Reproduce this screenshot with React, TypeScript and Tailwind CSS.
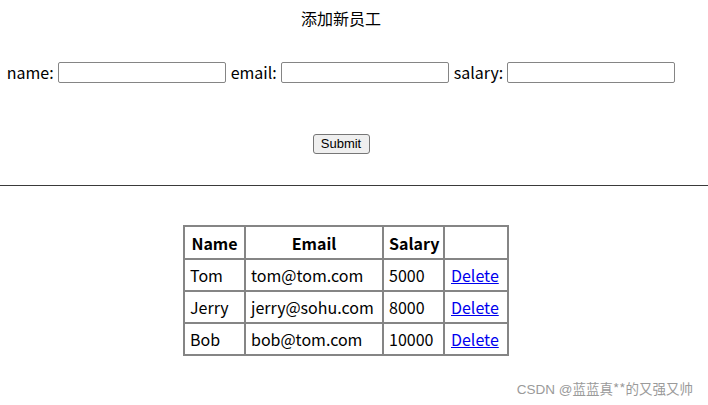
import React from "react";

const rows = [
  { name: "Tom", email: "tom@tom.com", salary: "5000" },
  { name: "Jerry", email: "jerry@sohu.com", salary: "8000" },
  { name: "Bob", email: "bob@tom.com", salary: "10000" },
];

export default function App() {
  const font = { fontFamily: '"Noto Sans CJK SC", "Noto Sans", sans-serif' };
  return (
    <div className="relative h-[405px] w-[708px] overflow-hidden bg-white text-black" style={font}>
      <div className="w-[682px]">
        <div className="mt-[6px] text-center text-[16px] leading-[24px]">添加新员工</div>
        <div className="mt-[32px] flex h-[21px] items-center justify-center text-[16px] leading-[21px]">
          <span>name:</span>
          <input className="ml-[4px] h-[21px] w-[168px] rounded-[2px] border border-[#858585] bg-white" />
          <span className="ml-[5px]">email:</span>
          <input className="ml-[4px] h-[21px] w-[168px] rounded-[2px] border border-[#858585] bg-white" />
          <span className="ml-[5px]">salary:</span>
          <input className="ml-[4px] h-[21px] w-[168px] rounded-[2px] border border-[#858585] bg-white" />
        </div>
        <div className="mt-[51px] flex justify-center">
          <button className="h-[20px] w-[57px] rounded-[3px] border border-[#767676] bg-[#efefef] text-[13px] leading-[18px] text-black" style={{ fontFamily: '"Liberation Sans", Arial, sans-serif' }}>
            Submit
          </button>
        </div>
      </div>
      <div className="mt-[31px] h-px w-full bg-[#3a3a3a]" />
      <div className="mt-[39px] flex w-[692px] justify-center">
        <table className="w-[326px] table-fixed border-collapse border-2 border-[#858585] text-[16px]">
          <colgroup>
            <col className="w-[61px]" />
            <col className="w-[138px]" />
            <col className="w-[61px]" />
            <col className="w-[64px]" />
          </colgroup>
          <thead>
            <tr className="h-[33px]">
              <th className="border-2 border-[#858585] px-[5px] text-center font-bold">Name</th>
              <th className="border-2 border-[#858585] px-[5px] text-center font-bold">Email</th>
              <th className="border-2 border-[#858585] px-[5px] text-center font-bold">Salary</th>
              <th className="border-2 border-[#858585] px-[5px]"></th>
            </tr>
          </thead>
          <tbody>
            {rows.map((r) => (
              <tr key={r.name} className="h-[32px]">
                <td className="border-2 border-[#858585] px-[5px] text-left">{r.name}</td>
                <td className="border-2 border-[#858585] px-[5px] text-left">{r.email}</td>
                <td className="border-2 border-[#858585] px-[5px] text-left">{r.salary}</td>
                <td className="border-2 border-[#858585] pl-[6px] pr-[4px] text-left">
                  <a href="#" className="text-[#0000ee] underline">Delete</a>
                </td>
              </tr>
            ))}
          </tbody>
        </table>
      </div>
      <div className="absolute right-[15px] top-[379px] text-[13.5px] leading-[18px] text-[#9a9a9a]">
        <span style={{ fontFamily: '"Liberation Sans", Arial, sans-serif' }}>CSDN @</span>
        <span>蓝蓝真**的又强又帅</span>
      </div>
    </div>
  );
}
